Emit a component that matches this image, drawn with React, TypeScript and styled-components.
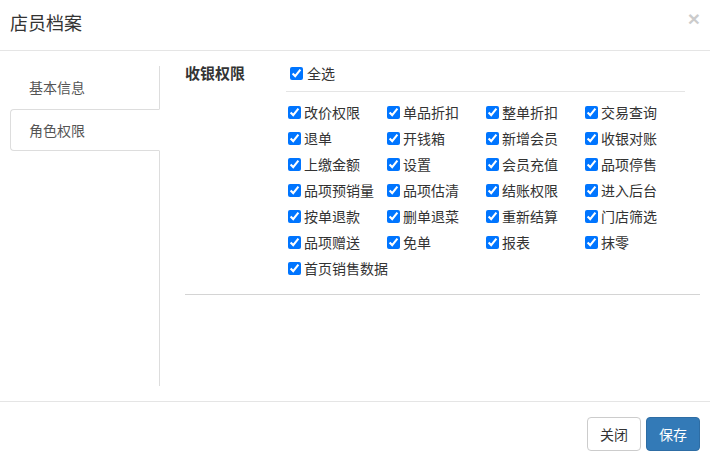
import React from "react";
import styled, { createGlobalStyle } from "styled-components";

const GlobalStyle = createGlobalStyle`
  html, body {
    margin: 0;
    padding: 0;
    background: #fff;
  }
  body {
    font-family: "Noto Sans CJK SC", "Noto Sans", "Liberation Sans", sans-serif;
    font-size: 14px;
    color: #333;
  }
  * { box-sizing: border-box; }
`;

const Modal = styled.div`
  width: 710px;
  height: 460px;
  display: flex;
  flex-direction: column;
  background: #fff;
  overflow: hidden;
`;

const Header = styled.div`
  flex-shrink: 0;
  height: 51px;
  padding: 10px 10px 0 10px;
  border-bottom: 1px solid #e5e5e5;
  display: flex;
  align-items: flex-start;
  justify-content: space-between;
`;

const Title = styled.h4`
  margin: 0;
  font-size: 18px;
  font-weight: normal;
  line-height: 25px;
  color: #333;
`;

const CloseButton = styled.button`
  border: 0;
  background: transparent;
  padding: 0;
  margin: -2px 0 0 0;
  font-family: "Liberation Sans", sans-serif;
  font-size: 21px;
  font-weight: bold;
  line-height: 1;
  color: #000;
  opacity: 0.2;
  cursor: pointer;
`;

const Body = styled.div`
  flex-shrink: 0;
  height: 350px;
  padding: 15px 10px;
  display: flex;
  gap: 25px;
`;

const TabList = styled.ul`
  list-style: none;
  margin: 0;
  padding: 0;
  width: 150px;
  flex-shrink: 0;
  border-right: 1px solid #ddd;
  display: flex;
  flex-direction: column;
  gap: 1px;
`;

const Tab = styled.li<{ $active?: boolean }>`
  height: 42px;
  padding: 10px 18px;
  line-height: 20px;
  color: #555;
  border: 1px solid ${(p) => (p.$active ? "#ddd" : "transparent")};
  border-right-color: transparent;
  border-radius: 4px 0 0 4px;
  margin-right: ${(p) => (p.$active ? "-1px" : "0")};
  background: #fff;
  position: relative;
  cursor: pointer;
`;

const Pane = styled.div`
  flex: 1;
  display: flex;
  flex-direction: column;
`;

const Section = styled.div`
  display: flex;
`;

const SectionLabel = styled.div`
  width: 101px;
  flex-shrink: 0;
  font-size: 15px;
  font-weight: bold;
  line-height: 14px;
  color: #333;
`;

const Options = styled.div`
  width: 399px;
  display: flex;
  flex-direction: column;
`;

const SelectAllRow = styled.div`
  height: 14px;
  padding-left: 4px;
  display: flex;
  align-items: center;
`;

const Divider = styled.hr<{ $tone: string; $gap: number }>`
  margin: ${(p) => p.$gap}px 0 0 0;
  border: 0;
  border-top: 1px solid ${(p) => p.$tone};
`;

const Grid = styled.div`
  padding: 7px 0 0 2px;
  display: grid;
  grid-template-columns: repeat(4, 99px);
  grid-auto-rows: 26px;
`;

const CheckLabel = styled.label<{ $gap: number }>`
  display: flex;
  align-items: center;
  gap: ${(p) => p.$gap}px;
  line-height: 20px;
  white-space: nowrap;
  color: #333;
  cursor: pointer;
`;

const Box = styled.input`
  width: 13px;
  height: 13px;
  margin: 0;
  flex-shrink: 0;
`;

const Footer = styled.div`
  flex-shrink: 0;
  border-top: 1px solid #e5e5e5;
  padding: 15px 10px;
  display: flex;
  justify-content: flex-end;
  gap: 5px;
`;

const Button = styled.button<{ $primary?: boolean }>`
  height: 34px;
  padding: 6px 12px;
  font-family: inherit;
  font-size: 14px;
  line-height: 20px;
  border-radius: 4px;
  border: 1px solid ${(p) => (p.$primary ? "#2e6da4" : "#ccc")};
  background: ${(p) => (p.$primary ? "#337ab7" : "#fff")};
  color: ${(p) => (p.$primary ? "#fff" : "#333")};
  cursor: pointer;
`;

const permissions = [
  "改价权限", "单品折扣", "整单折扣", "交易查询",
  "退单", "开钱箱", "新增会员", "收银对账",
  "上缴金额", "设置", "会员充值", "品项停售",
  "品项预销量", "品项估清", "结账权限", "进入后台",
  "按单退款", "删单退菜", "重新结算", "门店筛选",
  "品项赠送", "免单", "报表", "抹零",
  "首页销售数据",
];

function Check({ text, gap = 3 }: { text: string; gap?: number }) {
  return (
    <CheckLabel $gap={gap}>
      <Box type="checkbox" checked readOnly />
      <span>{text}</span>
    </CheckLabel>
  );
}

export default function App() {
  return (
    <>
      <GlobalStyle />
      <Modal>
        <Header>
          <Title>店员档案</Title>
          <CloseButton aria-label="close">×</CloseButton>
        </Header>
        <Body>
          <TabList>
            <Tab>基本信息</Tab>
            <Tab $active>角色权限</Tab>
          </TabList>
          <Pane>
            <Section>
              <SectionLabel>收银权限</SectionLabel>
              <Options>
                <SelectAllRow>
                  <Check text="全选" gap={4} />
                </SelectAllRow>
                <Divider $tone="#e5e5e5" $gap={11} />
                <Grid>
                  {permissions.map((p) => (
                    <Check key={p} text={p} />
                  ))}
                </Grid>
              </Options>
            </Section>
            <Divider $tone="#d4d4d4" $gap={13} />
          </Pane>
        </Body>
        <Footer>
          <Button>关闭</Button>
          <Button $primary>保存</Button>
        </Footer>
      </Modal>
    </>
  );
}
